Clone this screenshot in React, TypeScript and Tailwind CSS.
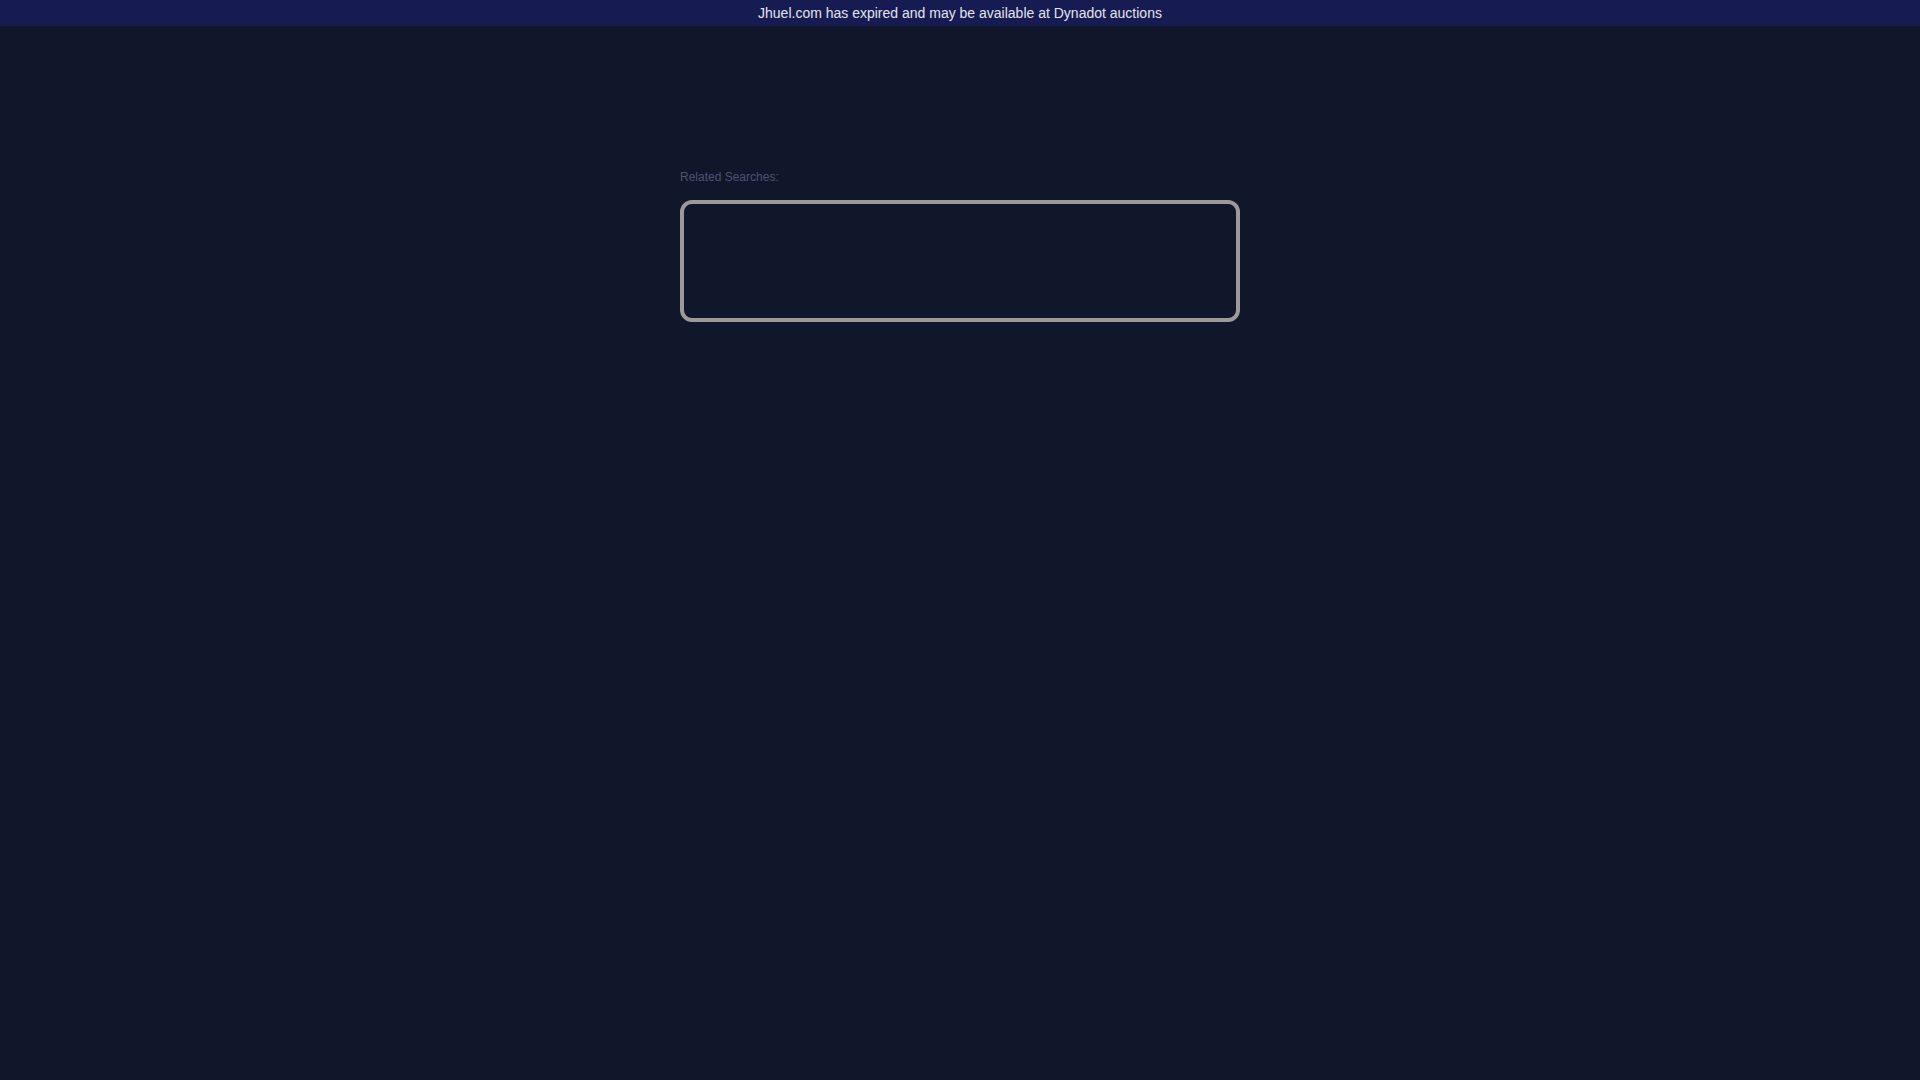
export default function App() {
  return (
    <div className="min-h-screen w-full bg-[#11172b]" style={{ fontFamily: '"Liberation Sans", Arial, sans-serif' }}>
      <div className="flex h-[26px] w-full items-center justify-center bg-[#161c52] text-[14px] text-[#e3e3ee]">
        Jhuel.com has expired and may be available at Dynadot auctions
      </div>
      <div className="mx-auto w-[560px] pt-[144px]">
        <div className="text-[12px] leading-[14px] text-[#4c5370]">Related Searches:</div>
        <div className="mt-[16px] h-[122px] rounded-[12px] border-4 border-[#9a9a9a]"></div>
      </div>
    </div>
  );
}
